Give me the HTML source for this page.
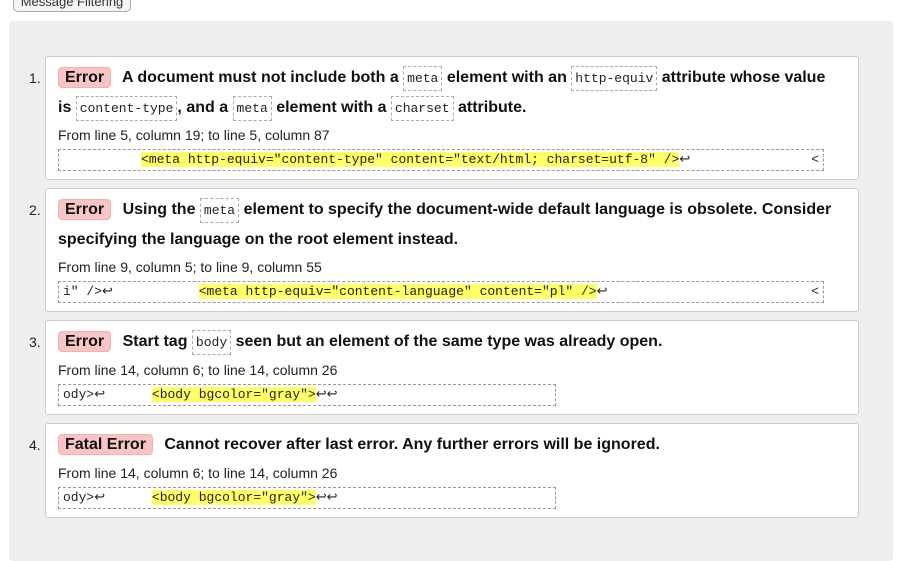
<!DOCTYPE html>
<html><head><meta charset="utf-8"><style>
body{margin:0;width:899px;height:548px;overflow:hidden;background:#fff;font-family:"Liberation Sans",Arial,sans-serif;position:relative}
.btn{position:absolute;left:13px;top:-8px;width:116px;height:18px;border:1px solid #aaa;border-radius:5px;background:#f4f4f4;font-size:13px;color:#333;text-align:center;line-height:18px}
.panel{position:absolute;left:9px;top:21px;width:884px;height:540px;background:#eeeeee;border-radius:4px}
.card{position:absolute;left:45px;width:812px;background:#fff;border:1px solid #ccc;border-radius:3px}
.num{position:absolute;left:-17px;font-size:14px;color:#222}
.msg{position:absolute;left:12px;right:20px;font-weight:bold;font-size:16px;line-height:29px;color:#111}
.badge{display:inline-block;background:#f8c4c4;border:1px solid #f2b0b0;border-radius:4px;padding:0 6px;line-height:19px;margin-right:7px}
code{font-family:"Liberation Mono",monospace;font-weight:normal;font-size:13px;border:1px dashed #aaa;padding:4px 3px;color:#222}
.from{position:absolute;left:12px;font-size:14px;color:#222}
.ext{position:absolute;left:12px;width:760px;padding-left:4px;height:20px;border:1px dashed #999;font-family:"Liberation Mono",monospace;font-size:13px;line-height:20px;white-space:pre;color:#222;overflow:hidden}
.hl{background:#ffff66}
.lt{position:absolute;right:4px;top:0}
</style></head><body>
<div class="btn">Message Filtering</div>
<div class="panel"></div>

<div class="card" style="top:56px;height:122px">
<span class="num" style="top:13px">1.</span>
<div class="msg" style="top:6px"><span class="badge">Error</span> A document must not include both a <code>meta</code> element with an <code>http-equiv</code> attribute whose value is <code>content-type</code>, and a <code>meta</code> element with a <code>charset</code> attribute.</div>
<div class="from" style="top:70px">From line 5, column 19; to line 5, column 87</div>
<div class="ext" style="top:92px">          <span class="hl">&lt;meta http-equiv="content-type" content="text/html; charset=utf-8" /&gt;</span>↩<span class="lt">&lt;</span></div>
</div>

<div class="card" style="top:188px;height:122px">
<span class="num" style="top:13px">2.</span>
<div class="msg" style="top:6px"><span class="badge">Error</span> Using the <code>meta</code> element to specify the document-wide default language is obsolete. Consider specifying the language on the root element instead.</div>
<div class="from" style="top:70px">From line 9, column 5; to line 9, column 55</div>
<div class="ext" style="top:92px">i" /&gt;↩           <span class="hl">&lt;meta http-equiv="content-language" content="pl" /&gt;</span>↩<span class="lt">&lt;</span></div>
</div>

<div class="card" style="top:320px;height:93px">
<span class="num" style="top:13px">3.</span>
<div class="msg" style="top:6px"><span class="badge">Error</span> Start tag <code>body</code> seen but an element of the same type was already open.</div>
<div class="from" style="top:41px">From line 14, column 6; to line 14, column 26</div>
<div class="ext" style="top:63px;width:492px">ody&gt;↩      <span class="hl">&lt;body bgcolor="gray"&gt;</span>↩↩</div>
</div>

<div class="card" style="top:423px;height:93px">
<span class="num" style="top:13px">4.</span>
<div class="msg" style="top:6px"><span class="badge">Fatal Error</span> Cannot recover after last error. Any further errors will be ignored.</div>
<div class="from" style="top:41px">From line 14, column 6; to line 14, column 26</div>
<div class="ext" style="top:63px;width:492px">ody&gt;↩      <span class="hl">&lt;body bgcolor="gray"&gt;</span>↩↩</div>
</div>
</body></html>
